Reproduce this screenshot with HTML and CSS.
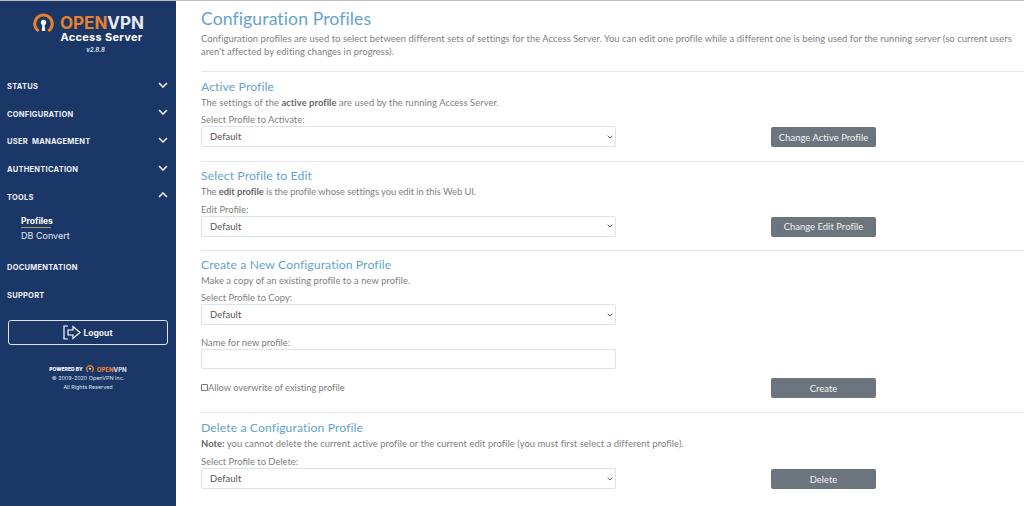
FILE: index.html
```html
<!DOCTYPE html>
<html lang="en">
<head>
<meta charset="utf-8">
<title>Configuration Profiles</title>
<link rel="stylesheet" href="styles.css">
</head>
<body>
<div class="app">
  <aside class="sidebar">
    <div class="brand">
      <div class="brand-top">
        <svg class="brand-icon" viewBox="0 0 24 24" width="21" height="21"><path d="M6.500 20.600A10 10 0 1 1 17.500 20.600" fill="none" stroke="#e8802c" stroke-width="3.600"/><circle cx="12" cy="10.800" r="3" fill="#fff"/><path d="M10.900 12h2.200l.9 8.500H10z" fill="#fff"/></svg>
        <span class="brand-name"><span class="brand-open">OPEN</span>VPN</span>
      </div>
      <div class="brand-sub">Access Server</div>
      <div class="brand-ver">v2.8.8</div>
    </div>
    <nav class="nav">
      <div class="nav-item"><span>STATUS</span><svg class="chev" viewBox="0 0 10 6" width="10" height="6"><path d="M1 1l4 4 4-4" /></svg></div>
      <div class="nav-item"><span>CONFIGURATION</span><svg class="chev" viewBox="0 0 10 6" width="10" height="6"><path d="M1 1l4 4 4-4" /></svg></div>
      <div class="nav-item"><span>USER&nbsp; MANAGEMENT</span><svg class="chev" viewBox="0 0 10 6" width="10" height="6"><path d="M1 1l4 4 4-4" /></svg></div>
      <div class="nav-item"><span>AUTHENTICATION</span><svg class="chev" viewBox="0 0 10 6" width="10" height="6"><path d="M1 1l4 4 4-4" /></svg></div>
      <div class="nav-item"><span>TOOLS</span><svg class="chev" viewBox="0 0 10 6" width="10" height="6"><path d="M1 5l4-4 4 4" /></svg></div>
      <div class="subnav">
        <div class="sub-active">Profiles</div>
        <div class="sub-item">DB Convert</div>
      </div>
      <div class="nav-item nav-doc"><span>DOCUMENTATION</span></div>
      <div class="nav-item"><span>SUPPORT</span></div>
    </nav>
    <div class="logout">
      <svg viewBox="0 0 18 15" width="18" height="15" class="logout-icon"><path d="M5 1H1v13h4M5 5h5V1.500L17 7.500 10 13.500V10H5z"/></svg>
      <span>Logout</span>
    </div>
    <div class="powered">
      <div class="powered-line"><b>POWERED BY</b>
        <svg viewBox="0 0 24 24" width="8" height="8"><path d="M6.500 20.600A10 10 0 1 1 17.500 20.600" fill="none" stroke="#e8802c" stroke-width="4"/><circle cx="12" cy="11" r="3" fill="#fff"/></svg>
        <b class="powered-name"><span class="brand-open">OPEN</span>VPN</b></div>
      <div>© 2009-2020 OpenVPN Inc.</div>
      <div>All Rights Reserved</div>
    </div>
  </aside>
  <main class="main">
    <section class="intro">
      <h1>Configuration Profiles</h1>
      <p class="lead">Configuration profiles are used to select between different sets of settings for the Access Server. You can edit one profile while a different one is being used for the running server (so current users aren't affected by editing changes in progress).</p>
    </section>
    <section class="block">
      <h2>Active Profile</h2>
      <p>The settings of the <b>active profile</b> are used by the running Access Server.</p>
      <label class="lbl">Select Profile to Activate:</label>
      <div class="row">
        <select class="field"><option>Default</option></select>
        <button class="btn">Change Active Profile</button>
      </div>
    </section>
    <section class="block">
      <h2>Select Profile to Edit</h2>
      <p class="tight">The <b>edit profile</b> is the profile whose settings you edit in this Web UI.</p>
      <label class="lbl">Edit Profile:</label>
      <div class="row">
        <select class="field"><option>Default</option></select>
        <button class="btn">Change Edit Profile</button>
      </div>
    </section>
    <section class="block block-new">
      <h2>Create a New Configuration Profile</h2>
      <p>Make a copy of an existing profile to a new profile.</p>
      <label class="lbl">Select Profile to Copy:</label>
      <select class="field"><option>Default</option></select>
      <label class="lbl lbl-name">Name for new profile:</label>
      <input class="field input" type="text">
      <div class="row row-check">
        <label class="check"><input type="checkbox"><span>Allow overwrite of existing profile</span></label>
        <button class="btn">Create</button>
      </div>
    </section>
    <section class="block block-last">
      <h2>Delete a Configuration Profile</h2>
      <p><b>Note:</b> you cannot delete the current active profile or the current edit profile (you must first select a different profile).</p>
      <label class="lbl">Select Profile to Delete:</label>
      <div class="row">
        <select class="field"><option>Default</option></select>
        <button class="btn">Delete</button>
      </div>
    </section>
  </main>
</div>
</body>
</html>
```
FILE: styles.css
```css
* { box-sizing: border-box; }
html, body { margin: 0; height: 506px; overflow: hidden; }
body { font-family: "Lato", "Open Sans", sans-serif; background: #fff; color: #808080; }
.app { display: flex; height: 506px; border-top: 1px solid #bdbdbd; }
.sidebar { width: 176px; flex: none; background: #1a3767; color: #fff; display: flex; flex-direction: column; }
.brand { height: 72px; padding-top: 14px; display: flex; flex-direction: column; align-items: center; }
.brand-top { display: flex; align-items: center; gap: 6px; height: 16px; margin-left: 1px; }
.brand-icon { flex: none; }
.brand-name { font: 700 17px/16px "Inter", sans-serif; color: #e6ebf2; }
.brand-open { color: #e8802c; }
.brand-sub { font: 700 11px/12px "Inter", sans-serif; letter-spacing: .3px; margin-left: 27px; }
.brand-ver { font: italic 700 6px/8px "Inter", sans-serif; color: #cfd7e4; margin-top: 3px; margin-left: 15px; }
.nav { padding: 0 8px 0 7px; display: flex; flex-direction: column; }
.nav-item { height: 27.600px; display: flex; justify-content: space-between; align-items: center; font: 700 7.500px/12px "Inter", sans-serif; letter-spacing: .25px; color: #eef1f6; padding-top: 1px; }
.chev { fill: none; stroke: #fff; stroke-width: 1.500; margin: -5px 0 0 0; }
.subnav { padding: 4px 0 0 14px; height: 43px; font: 400 9px/14px "Inter", sans-serif; color: #e3e8f0; }
.sub-active { font-weight: 700; font-size: 8.500px; color: #fff; width: 30px; height: 13px; line-height: 12px; border-bottom: 1px solid #b39a5a; }
.sub-item { line-height: 15px; }
.logout { margin: 11px 8px 0 8px; height: 25px; border: 1px solid #dfe4ec; border-radius: 3px; display: flex; align-items: center; justify-content: center; gap: 2px; font: 700 8.500px/12px "Inter", sans-serif; color: #f2f4f8; }
.logout-icon { fill: none; stroke: #fff; stroke-width: 1.200; }
.powered { margin-top: 19px; text-align: center; font: 400 5.400px/9px "Inter", sans-serif; color: #dfe4ec; }
.powered-line { display: flex; justify-content: center; align-items: center; gap: 3px; height: 10px; font-size: 5px; }
.powered-line b { font-weight: 800; color: #fff; }
.powered-line .powered-name { color: #cfd7e4; font-size: 6px; }
.powered-name .brand-open { color: #e8802c; }
.main { flex: 1; min-width: 0; padding: 0 0 0 25px; overflow: hidden; }
.intro { height: 71px; border-bottom: 1px solid #e8e8e8; padding-top: 7px; }
h1 { margin: 0; font: 400 17.600px/21px "Lato", sans-serif; color: #64a3d0; letter-spacing: .1px; }
.lead { margin: 3px 0 0; font-size: 9.400px; line-height: 13px; letter-spacing: .06px; }
.block { height: 89.500px; border-bottom: 1px solid #e8e8e8; padding-top: 5.500px; }
.block-new { height: 162px; padding-top: 4.500px; }
.block-last { border-bottom: 0; padding-top: 6px; }
h2 { margin: 0 0 1px; font: 400 12.200px/17px "Lato", sans-serif; color: #64a3d0; letter-spacing: .1px; }
.block p { margin: 0; font-size: 9.400px; line-height: 14px; letter-spacing: .06px; }
.block p.tight { letter-spacing: -.06px; }
.block p b { font-weight: 700; color: #666; }
.lbl { display: block; margin-top: 4.500px; font-size: 9.400px; line-height: 12px; letter-spacing: 0; }
.block-last .lbl { margin-top: 5px; }
.field { display: block; width: 415px; height: 21px; margin: 0; padding: 0 4px 0 8px; border: 1px solid #dde3ea; border-radius: 2px; color: #555; font: 400 9.400px "Lato", sans-serif; letter-spacing: .1px; appearance: none; background: #fff url("data:image/svg+xml,%3Csvg xmlns='http://www.w3.org/2000/svg' width='6' height='4'%3E%3Cpath d='M.6.6 3 3l2.400-2.400' fill='none' stroke='%23666' stroke-width='1'/%3E%3C/svg%3E") no-repeat right 2px center; }
.lbl-name { margin-top: 12px; }
.input { height: 20px; background-image: none; }
.row { display: flex; align-items: flex-end; }
.btn { margin-left: 155px; width: 105px; height: 20px; padding: 0; border: 0; border-radius: 2px; background: #6c757d; color: #f2f3f4; font: 400 9.400px "Lato", sans-serif; letter-spacing: .05px; }
.row-check { height: 20px; margin-top: 9px; }
.check { width: 415px; height: 18px; align-self: flex-start; display: flex; align-items: center; font-size: 9.400px; letter-spacing: -.06px; }
.check input { width: 7px; height: 7px; margin: 0; appearance: none; border: 1px solid #777; border-radius: 1px; background: #fff; }
```
